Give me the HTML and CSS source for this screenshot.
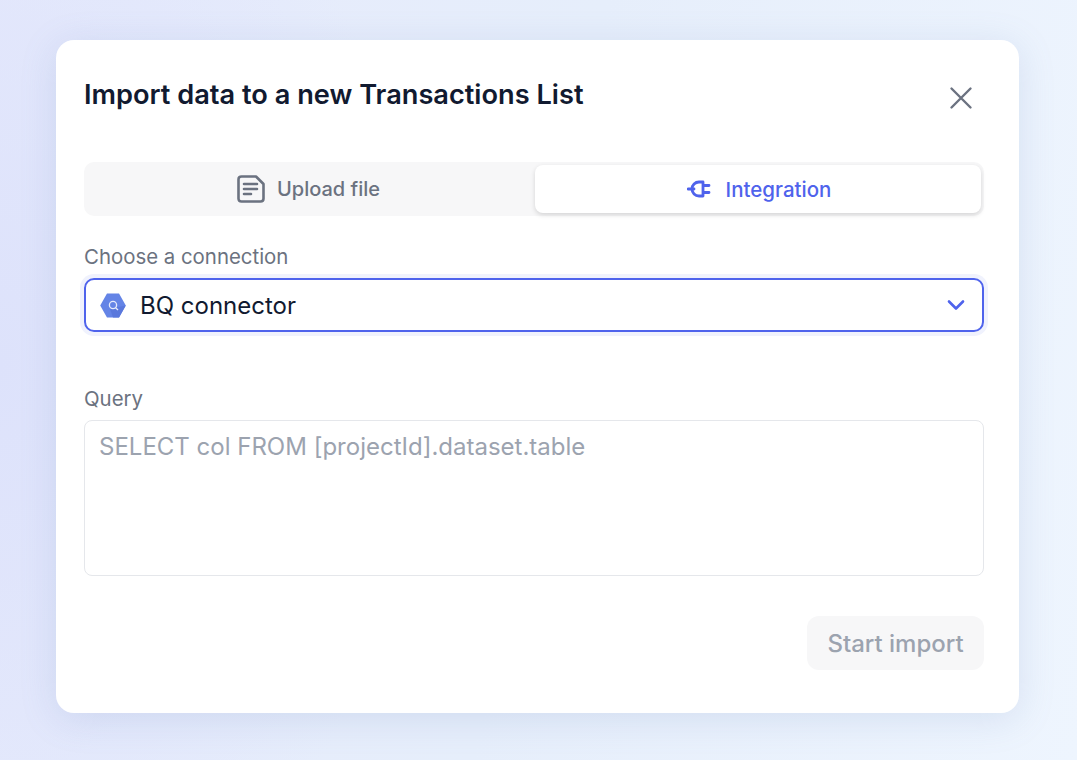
FILE: index.html
```html
<!DOCTYPE html>
<html lang="en">
<head>
<meta charset="utf-8">
<title>Import data</title>
<link rel="stylesheet" href="styles.css">
</head>
<body>
<main class="modal">
  <header class="head">
    <h1 class="title">Import data to a new Transactions List</h1>
    <button class="close" aria-label="Close">
      <svg width="24" height="24" viewBox="0 0 24 24" fill="none" stroke="#6b7280" stroke-width="2.400" stroke-linecap="round"><path d="M2.500 2.500 L21.500 21.500 M21.500 2.500 L2.500 21.500"/></svg>
    </button>
  </header>
  <div class="tabs">
    <div class="tab">
      <svg width="28" height="28" viewBox="0 0 28 28" fill="none" stroke="#6b7280" stroke-width="2.600" stroke-linecap="round" stroke-linejoin="round"><path d="M1.500 4.500 Q1.500 1.500 4.500 1.500 H19 L26.500 9 V23.500 Q26.500 26.500 23.500 26.500 H4.500 Q1.500 26.500 1.500 23.500 Z"/><path d="M7 9 H20 M7 14 H20 M7 19 H14"/></svg>
      <span class="tab-text">Upload file</span>
    </div>
    <div class="tab active">
      <svg width="24" height="20" viewBox="0 0 24 20" fill="none" stroke="#4f63ec" stroke-width="2.800" stroke-linecap="round" stroke-linejoin="round"><path d="M1 10 H7"/><path d="M16 3 H12 A7 7 0 0 0 12 17 H16 Z"/><path d="M17 6.500 H22 M17 13.500 H22"/></svg>
      <span class="tab-text">Integration</span>
    </div>
  </div>
  <label class="label first">Choose a connection</label>
  <div class="select">
    <svg class="bq" width="26" height="25" viewBox="0 0 26 25"><path d="M7 0.500 H19 L25.800 12.500 L19 24.500 H7 L0.200 12.500 Z" fill="#6484e6"/><path d="M15.500 14.500 L25.800 12.500 L19 24.500 H13 L10 16 Z" fill="#5a78dc"/><circle cx="13" cy="12" r="3.600" fill="none" stroke="#e6ebfb" stroke-width="1.300"/><path d="M15.600 14.700 L18 17" stroke="#e6ebfb" stroke-width="1.300"/></svg>
    <span class="value">BQ connector</span>
    <svg class="chev" width="18" height="12" viewBox="0 0 18 12" fill="none" stroke="#4f63ec" stroke-width="2.600" stroke-linecap="round" stroke-linejoin="round"><path d="M2 2.500 L9 9.500 L16 2.500"/></svg>
  </div>
  <label class="label second">Query</label>
  <div class="query">SELECT col FROM [projectId].dataset.table</div>
  <footer class="foot">
    <button class="start">Start import</button>
  </footer>
</main>
</body>
</html>
```

FILE: styles.css
```css
* { box-sizing: border-box; }
html, body { height: 100%; }
body {
  margin: 0;
  height: 760px;
  overflow: hidden;
  padding: 40px 58px 47px 56px;
  font-family: Inter, "Liberation Sans", sans-serif;
  background:
    radial-gradient(ellipse 420px 620px at 0% 48%, #dde2fb 0%, rgba(221, 226, 251, 0) 100%),
    linear-gradient(100deg, #e6eafc 0%, #e6eefb 50%, #eef5fe 100%);
}
.modal {
  width: 963px;
  height: 673px;
  background: #fff;
  border-radius: 18px;
  padding: 0 35px 0 28px;
  box-shadow: 0 6px 36px rgba(110, 140, 190, 0.18);
}
.head {
  display: flex;
  justify-content: space-between;
  padding-top: 39px;
  height: 122px;
}
.title {
  margin: 0;
  font-size: 27.200px;
  line-height: 32px;
  font-weight: 600;
  color: #111a30;
}
.close {
  border: 0;
  background: none;
  padding: 0;
  margin: 7px 0 0 0;
  width: 24px;
  height: 24px;
  transform: translateX(-11px);
}
.close svg { display: block; }
.tabs {
  display: flex;
  width: 900px;
  height: 54px;
  padding: 3px;
  gap: 2px;
  border-radius: 10px;
  background: #f7f7f8;
}
.tab {
  flex: 1 1 0;
  display: flex;
  align-items: center;
  justify-content: center;
  gap: 12px;
  font-size: 20px;
  font-weight: 500;
  color: #6b7280;
  border-radius: 8px;
}
.tab-text { margin-right: 3px; }
.tab.active {
  background: #fff;
  color: #4f63ec;
  font-size: 20.500px;
  gap: 15px;
  box-shadow: 0 2px 5px rgba(0, 0, 0, 0.14);
}
.tab.active svg { margin-left: 2px; }
.tab.active .tab-text { margin-right: 0; }
.label {
  display: block;
  font-size: 20.400px;
  line-height: 28px;
  font-weight: 400;
  color: #6b7280;
}
.label.first { margin-top: 27px; }
.label.second { margin-top: 53px; }
.select {
  display: flex;
  align-items: center;
  height: 54px;
  width: 900px;
  margin-top: 7px;
  padding: 0 17px 0 14px;
  border: 2px solid #4f63ec;
  border-radius: 10px;
  box-shadow: 0 0 0 4px #f0f2fd;
}
.value {
  flex: 1;
  margin-left: 14px;
  font-size: 24px;
  font-weight: 400;
  color: #111a30;
}
.query {
  width: 900px;
  height: 156px;
  margin-top: 7px;
  padding: 11px 14px;
  border: 1.500px solid #e5e7eb;
  border-radius: 8px;
  font-size: 24px;
  line-height: 30px;
  color: #9ca3af;
}
.foot {
  display: flex;
  justify-content: flex-end;
  width: 900px;
  margin-top: 40px;
}
.start {
  width: 177px;
  height: 54px;
  border: 0;
  border-radius: 12px;
  background: #f7f7f8;
  color: #9ca3af;
  font-family: inherit;
  font-size: 24px;
  font-weight: 500;
}
```
